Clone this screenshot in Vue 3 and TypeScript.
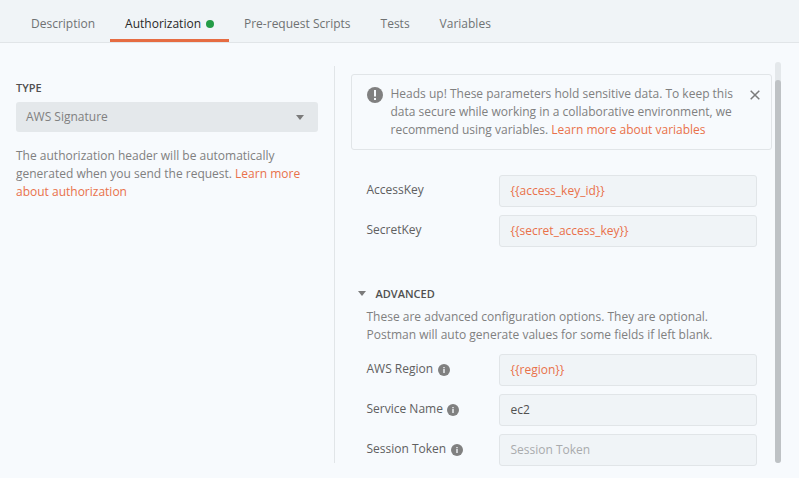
<script setup lang="ts">
import { ref } from 'vue'

interface Tab {
  label: string
  configured?: boolean
}

interface Field {
  label: string
  value: string
  placeholder?: string
  info?: boolean
}

const tabs: Tab[] = [
  { label: 'Description' },
  { label: 'Authorization', configured: true },
  { label: 'Pre-request Scripts' },
  { label: 'Tests' },
  { label: 'Variables' },
]
const activeTab = ref('Authorization')
const showNotice = ref(true)
const showAdvanced = ref(true)

const keyFields: Field[] = [
  { label: 'AccessKey', value: '{{access_key_id}}' },
  { label: 'SecretKey', value: '{{secret_access_key}}' },
]
const advancedFields: Field[] = [
  { label: 'AWS Region', value: '{{region}}', info: true },
  { label: 'Service Name', value: 'ec2', info: true },
  { label: 'Session Token', value: '', placeholder: 'Session Token', info: true },
]

const isVariable = (value: string): boolean => /^\{\{.*\}\}$/.test(value)
</script>

<template>
  <div class="editor">
    <nav class="tabs">
      <button
        v-for="tab in tabs"
        :key="tab.label"
        class="tab"
        :class="{ active: tab.label === activeTab }"
        @click="activeTab = tab.label"
      >
        <span>{{ tab.label }}</span>
        <span v-if="tab.configured" class="dot"></span>
      </button>
    </nav>

    <main class="content">
      <section class="type-pane">
        <h3 class="heading">TYPE</h3>
        <div class="select">
          <span>AWS Signature</span>
          <svg class="caret" width="8" height="5" viewBox="0 0 8 5"><path d="M0 0h8L4 5z" /></svg>
        </div>
        <p class="help">
          The authorization header will be automatically generated when you send the request.
          <a class="link">Learn more about authorization</a>
        </p>
      </section>

      <section class="params-pane">
        <div v-if="showNotice" class="notice">
          <svg class="notice-icon" width="16" height="16" viewBox="0 0 16 16">
            <circle cx="8" cy="8" r="8" fill="#808080" />
            <path d="M7 3h2v6.500H7zM7 11h2v2H7z" fill="#f7fafd" />
          </svg>
          <p class="notice-text">
            Heads up! These parameters hold sensitive data. To keep this data secure while working in a
            collaborative environment, we recommend using variables.
            <a class="link">Learn more about variables</a>
          </p>
          <button class="close" aria-label="Close" @click="showNotice = false">
            <svg width="10" height="10" viewBox="0 0 10 10">
              <path d="M.7.700l8.600 8.600M9.300.700L.7 9.300" stroke="#7b7b7b" stroke-width="1.500" />
            </svg>
          </button>
        </div>

        <div class="fields keys">
          <div v-for="field in keyFields" :key="field.label" class="field">
            <span class="label">{{ field.label }}</span>
            <div class="input" :class="{ variable: isVariable(field.value) }">{{ field.value }}</div>
          </div>
        </div>

        <div class="advanced-header" @click="showAdvanced = !showAdvanced">
          <svg class="caret" width="8" height="5" viewBox="0 0 8 5"><path d="M0 0h8L4 5z" /></svg>
          <h3 class="heading">ADVANCED</h3>
        </div>
        <template v-if="showAdvanced">
          <p class="advanced-text">
            These are advanced configuration options. They are optional. Postman will auto generate values
            for some fields if left blank.
          </p>
          <div class="fields">
            <div v-for="field in advancedFields" :key="field.label" class="field">
              <span class="label">
                {{ field.label }}
                <svg v-if="field.info" class="info" width="12" height="12" viewBox="0 0 12 12">
                  <circle cx="6" cy="6" r="6" fill="#808080" />
                  <path d="M5.200 3h1.600v1.200H5.200zM5.200 5h1.600v4H5.200z" fill="#e4e7e9" />
                </svg>
              </span>
              <div
                class="input"
                :class="{ variable: isVariable(field.value), placeholder: !field.value }"
              >{{ field.value || field.placeholder }}</div>
            </div>
          </div>
        </template>
      </section>

      <div class="scrollbar"><div class="thumb"></div></div>
    </main>
  </div>
</template>

<style>
body {
  background: #f7fafd;
}
</style>

<style scoped>
.editor {
  box-sizing: border-box;
  height: 478px;
  overflow: hidden;
  display: flex;
  flex-direction: column;
  background: #f7fafd;
  color: #808080;
  font: 12px/18px 'Open Sans', sans-serif;
}
button {
  border: 0;
  padding: 0;
  background: none;
  font: inherit;
  color: inherit;
}
p,
h3 {
  margin: 0;
}
.tabs {
  box-sizing: border-box;
  flex: none;
  display: flex;
  height: 43px;
  padding-left: 16px;
  background: #f0f4f7;
  border-bottom: 1px solid #e1e5e8;
}
.tab {
  box-sizing: border-box;
  display: flex;
  align-items: center;
  gap: 5px;
  height: 42px;
  padding: 8px 15px 0;
  border-bottom: 3px solid transparent;
  white-space: nowrap;
  color: #6f7273;
}
.tab.active {
  border-bottom-color: #e66c42;
  color: #282828;
}
.dot {
  width: 8px;
  height: 8px;
  border-radius: 50%;
  background: #249c47;
}
.content {
  flex: 1;
  min-height: 0;
  display: flex;
}
.type-pane {
  box-sizing: border-box;
  width: 335px;
  height: 397px;
  margin-top: 23px;
  padding: 13px 16px 0;
  border-right: 1px solid #e1e5e8;
}
.heading {
  font-size: 11px;
  line-height: 18px;
  font-weight: 600;
  color: #505050;
}
.select {
  box-sizing: border-box;
  display: flex;
  align-items: center;
  justify-content: space-between;
  height: 30px;
  margin-top: 5px;
  padding: 0 14px 0 10px;
  border-radius: 3px;
  background: #e4e8eb;
}
.caret {
  flex: none;
  fill: #7b7b7b;
}
.help {
  margin-top: 15px;
}
.link {
  color: #e9714a;
}
.params-pane {
  box-sizing: border-box;
  width: 437px;
  padding: 31px 0 0 16px;
}
.notice {
  box-sizing: border-box;
  display: flex;
  align-items: flex-start;
  width: 421px;
  height: 76px;
  padding: 10px 11px 0 15px;
  border: 1px solid #e1e5e8;
  border-radius: 3px;
}
.notice-icon {
  flex: none;
  margin: 2px 7.5px 0 0;
}
.notice-text {
  width: 346px;
}
.close {
  display: flex;
  margin: 5px 0 0 auto;
}
.fields {
  display: flex;
  flex-direction: column;
  gap: 8px;
  padding-left: 15px;
}
.keys {
  margin-top: 25px;
}
.field {
  display: flex;
  height: 32px;
}
.label {
  display: flex;
  align-items: flex-start;
  box-sizing: border-box;
  width: 133px;
  padding: 6px 0 0 0.5px;
  color: #606060;
}
.info {
  margin: 4px 0 0 4.5px;
}
.input {
  box-sizing: border-box;
  width: 258px;
  padding: 6px 10px 6px 10.5px;
  border: 1px solid #e1e5e8;
  border-radius: 3px;
  background: #f0f4f7;
  color: #505050;
}
.input.variable {
  color: #e9714a;
}
.input.placeholder {
  color: #a9abad;
}
.advanced-header {
  display: flex;
  align-items: center;
  gap: 9.5px;
  margin-top: 38px;
  padding-left: 7px;
}
.advanced-header .caret {
  margin-bottom: 2px;
}
.advanced-text {
  width: 380px;
  margin: 5px 0 10px 15.5px;
}
.scrollbar {
  display: flex;
  flex-direction: column;
  width: 6px;
  height: 401px;
  margin: 19px 0 0 3px;
  border-radius: 3px;
  background: #e4e8eb;
}
.thumb {
  height: 383px;
  margin-top: 18px;
  border-radius: 3px;
  background: #bec2c5;
}
</style>
